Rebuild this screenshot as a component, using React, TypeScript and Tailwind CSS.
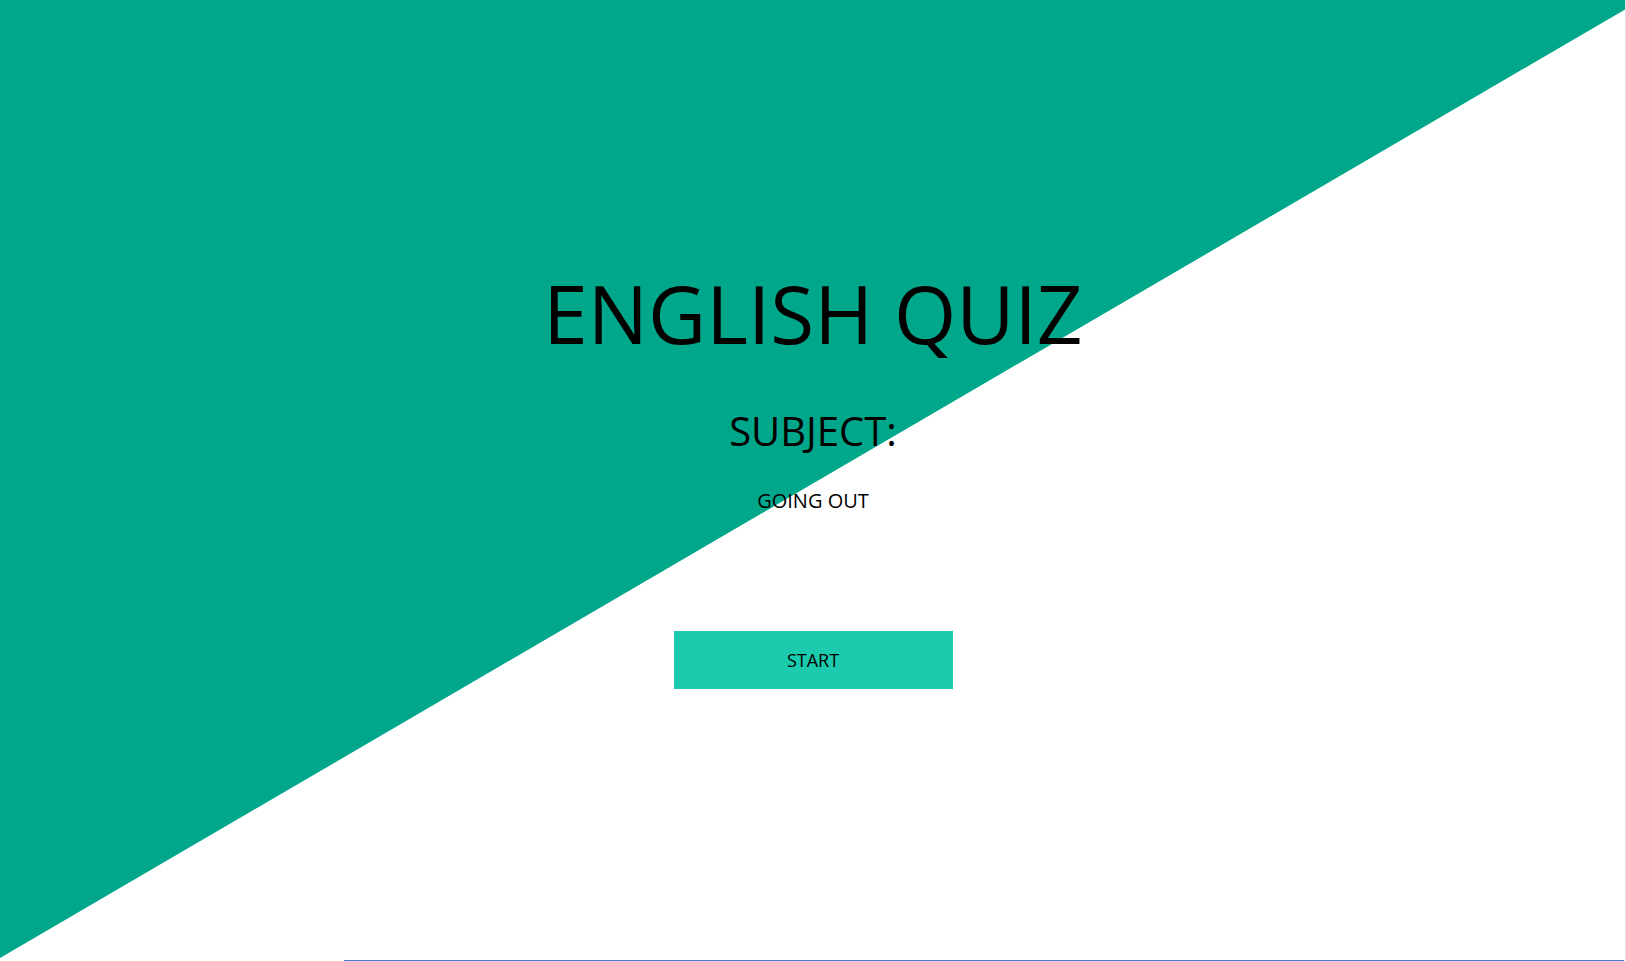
const App = () => {
  return (
    <div className="relative h-[961px] w-full overflow-hidden bg-white font-['Open_Sans',sans-serif] text-black">
      {/* diagonal teal background */}
      <div className="absolute inset-0 bg-[#00a78b] [clip-path:polygon(0_0,100%_0,100%_9px,0_958px)]" />
      <div className="absolute right-0 top-0 h-full w-px bg-[#e2e2e2]" />
      <div className="absolute bottom-0 left-[344px] right-[2px] h-px bg-[#4a80d0]" />

      <div className="relative flex flex-col items-center pt-[273px]">
        <h1 className="text-[80px] leading-none font-normal">ENGLISH QUIZ</h1>
        <h2 className="mt-[58px] text-[40px] leading-none font-normal">SUBJECT:</h2>
        <p className="mt-[40px] text-[20px] leading-none">GOING OUT</p>
        <button className="mt-[120px] h-[58px] w-[279px] bg-[#1ccbad] text-[18px] leading-none">
          START
        </button>
      </div>
    </div>
  );
};

export default App;
